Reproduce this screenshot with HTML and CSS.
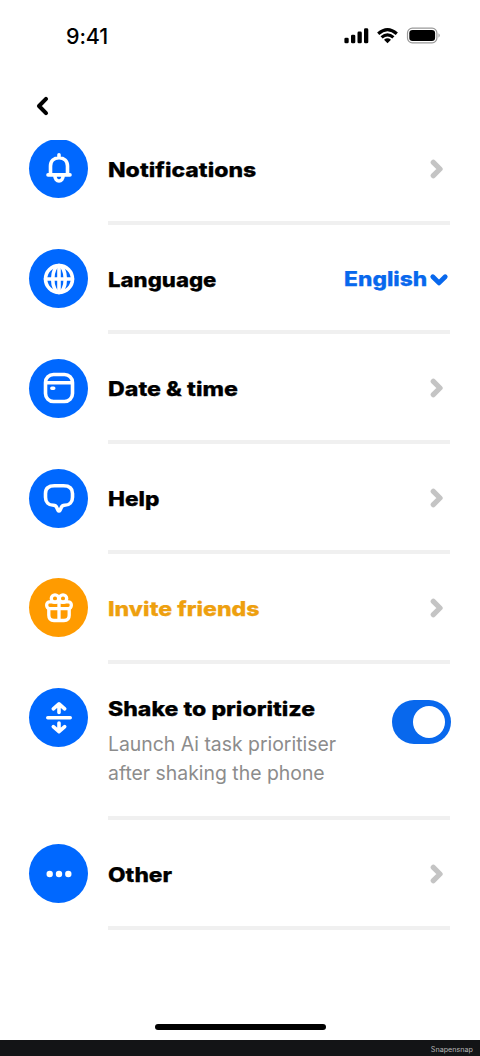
FILE: index.html
```html
<!DOCTYPE html>
<html lang="en">
<head>
<meta charset="utf-8">
<title>Settings</title>
<link rel="stylesheet" href="styles.css">
</head>
<body>
<main class="screen">
  <header class="status">
    <span class="clock">9:41</span>
    <svg class="status-icons" width="98" height="18" viewBox="0 0 98 18">
      <rect x="0.4" y="10.7" width="4.3" height="5.6" rx="1.4"/>
      <rect x="7" y="7.7" width="4.3" height="8.6" rx="1.4"/>
      <rect x="13.5" y="4.6" width="4.3" height="11.7" rx="1.4"/>
      <rect x="20" y="1.3" width="4.3" height="15" rx="1.4"/>
      <g fill="none" stroke="#000" stroke-width="3.2">
        <path d="M34.2 6.7Q43.5-1.6 52.8 6.7"/>
        <path d="M37.6 10.4Q43.5 5.2 49.4 10.4"/>
      </g>
      <path d="M40 12.7Q43.5 9.9 47 12.7L43.5 16.3Z"/>
      <rect x="63.5" y="1.2" width="29.4" height="14.6" rx="4.8" fill="none" stroke="#999" stroke-width="1.2"/>
      <rect x="65.3" y="3" width="25.8" height="11" rx="3.3"/>
      <path d="M94.5 6.3Q97 8.5 94.5 10.8Z" fill="#999"/>
    </svg>
  </header>
  <nav class="nav">
    <svg width="14" height="20" viewBox="0 0 14 20"><path class="back" d="M11 2.900 4 10l7 7.100"/></svg>
  </nav>
  <ul class="list">
    <li class="row">
      <span class="badge"><svg class="icon" viewBox="0 0 32 32"><path d="M7.500 21.800V13.100C7.500 7.900 11 4.700 16 4.700s8.500 3.200 8.500 8.400V21.800M5 21.900H27M16 4.500V1.700M11.800 22.300C12 29.800 20 29.800 20.200 22.300"/></svg></span>
      <div class="content"><span class="title t-notifications">Notifications</span><svg class="chevron" viewBox="0 0 14 20"><path d="M3.300 3.300 10 10 3.300 16.700"/></svg></div>
    </li>
    <li class="row">
      <span class="badge"><svg class="icon" viewBox="0 0 32 32"><circle cx="16" cy="16" r="13.500"/><ellipse cx="16" cy="16" rx="6.300" ry="13.500"/><path d="M16 2.500V29.500M2.500 16H29.500"/></svg></span>
      <div class="content"><span class="title t-language">Language</span><span class="value"><span class="value-text">English</span><svg class="down" viewBox="0 0 18 14"><path d="M2.800 3.700 9 9.900 15.200 3.700"/></svg></span></div>
    </li>
    <li class="row">
      <span class="badge"><svg class="icon" viewBox="0 0 32 32"><rect x="2.500" y="2.500" width="27" height="27" rx="8"/><path d="M3 10.700H29M8.900 16.200H10.700"/></svg></span>
      <div class="content"><span class="title t-date">Date &amp; time</span><svg class="chevron" viewBox="0 0 14 20"><path d="M3.300 3.300 10 10 3.300 16.700"/></svg></div>
    </li>
    <li class="row">
      <span class="badge"><svg class="icon" viewBox="0 0 32 32"><path d="M11.500 3.800H20.500Q29.500 3.800 29.500 11.500V15.200C29.500 20 26.500 23.300 21.500 23.300 19.500 23.300 19 24 18.300 25.500L17 28.200Q16 29.800 15 28.200L13.700 25.500C13 24 12.500 23.300 10.500 23.300 5.500 23.300 2.500 20 2.500 15.200V11.500Q2.500 3.800 11.500 3.800Z"/></svg></span>
      <div class="content"><span class="title t-help">Help</span><svg class="chevron" viewBox="0 0 14 20"><path d="M3.300 3.300 10 10 3.300 16.700"/></svg></div>
    </li>
    <li class="row invite">
      <span class="badge"><svg class="icon" viewBox="0 0 32 32"><rect x="3.700" y="9.800" width="24.600" height="6.800" rx="3"/><path d="M5.800 17V23.300Q5.800 28.500 11 28.500H21Q26.200 28.500 26.200 23.300V17M16 9.500V28"/><circle cx="12" cy="6.600" r="3.700"/><circle cx="20" cy="6.600" r="3.700"/></svg></span>
      <div class="content"><span class="title t-invite">Invite friends</span><svg class="chevron" viewBox="0 0 14 20"><path d="M3.300 3.300 10 10 3.300 16.700"/></svg></div>
    </li>
    <li class="row shake">
      <span class="badge"><svg class="icon" viewBox="0 0 32 32"><path d="M4.800 15.800H27.200M16 10.500V2.300M10.300 6.900 16 1.800 21.700 6.900M16 21V29.200M10.300 24.600 16 29.700 21.700 24.600"/></svg></span>
      <div class="content"><div class="copy"><span class="title t-shake">Shake to prioritize</span><p class="note">Launch Ai task prioritiser<br>after shaking the phone</p></div><span class="toggle"><span class="knob"></span></span></div>
    </li>
    <li class="row">
      <span class="badge"><svg class="icon dots" viewBox="0 0 32 32"><circle cx="6.700" cy="16" r="3.200"/><circle cx="16" cy="16" r="3.200"/><circle cx="25.300" cy="16" r="3.200"/></svg></span>
      <div class="content"><span class="title t-other">Other</span><svg class="chevron" viewBox="0 0 14 20"><path d="M3.300 3.300 10 10 3.300 16.700"/></svg></div>
    </li>
  </ul>
  <div class="home"></div>
</main>
<footer class="credit">Snapensnap</footer>
</body>
</html>
```
FILE: styles.css
```css
* { box-sizing: border-box; }
body { margin: 0; background: #fff; color: #000; font-family: Inter, "Liberation Sans", sans-serif; }
.screen { height: 1040px; display: flex; flex-direction: column; }
.status { height: 72px; flex: none; display: flex; justify-content: space-between; align-items: center; padding: 0 38px 0 66px; }
.clock { font-size: 21.5px; font-weight: 500; letter-spacing: -0.1px; line-height: 28px; }
.nav { height: 68px; flex: none; padding: 24px 0 0 35px; }
.nav svg { display: block; }
.back { fill: none; stroke: #000; stroke-width: 4.1; stroke-linecap: round; stroke-linejoin: round; }
.list { list-style: none; margin: 0; padding: 0; height: 870px; flex: none; overflow: hidden; }
.row { display: flex; gap: 20px; height: 109.8px; padding: 0 29.6px 0 29px; }
.row:first-child { margin-top: -25.2px; }
.badge { width: 59px; height: 59px; margin-top: 24.4px; flex: none; border-radius: 50%; background: #0068ff; display: flex; align-items: center; justify-content: center; }
.invite .badge { background: #ff9b00; }
.icon { width: 32px; height: 32px; fill: none; stroke: #fff; stroke-width: 3.6; stroke-linecap: round; stroke-linejoin: round; overflow: visible; }
.invite .icon { stroke-width: 3.3; }
.dots { fill: #fff; stroke: none; }
.content { flex: 1; display: flex; justify-content: space-between; padding-top: 39px; border-bottom: 4px solid #f0f0f0; }
.title { display: block; font-size: 20.3px; line-height: 31px; font-weight: 800; white-space: nowrap; -webkit-text-stroke: 0.25px currentColor; transform-origin: left center; }
.t-notifications { transform: scaleX(1.135); }
.t-language { transform: scaleX(1.093); }
.t-date { transform: scaleX(1.145); }
.t-help { transform: scaleX(1.115); }
.t-invite { transform: scaleX(1.14); }
.t-shake { transform: scaleX(1.137); }
.t-other { transform: scaleX(1.123); }
.invite .title { color: #eea00f; }
.chevron { width: 14px; height: 20px; margin: 5px 6px 0 0; fill: none; stroke: #c4c4c4; stroke-width: 5.3; stroke-linecap: round; stroke-linejoin: round; overflow: visible; }
.value { display: flex; gap: 3px; margin-right: 2.5px; color: #0868ed; }
.value-text { font-size: 20.3px; line-height: 29px; font-weight: 800; -webkit-text-stroke: 0.25px currentColor; transform: scaleX(1.12); transform-origin: right center; }
.down { width: 18px; height: 14px; margin-top: 9.5px; fill: none; stroke: currentColor; stroke-width: 4.8; stroke-linecap: round; stroke-linejoin: round; overflow: visible; }
.shake { height: 156.2px; }
.shake .content { padding-top: 29.5px; }
.note { margin: 5.5px 0 0; font-size: 19.4px; line-height: 29.3px; color: #8c8c8c; white-space: nowrap; }
.toggle { width: 59px; height: 44px; margin: 7px -0.6px 0 0; padding: 6px; border-radius: 22px; background: #0868ed; display: flex; justify-content: flex-end; flex: none; }
.knob { width: 32px; height: 32px; border-radius: 50%; background: #fff; }
.home { width: 171px; height: 6px; border-radius: 3px; background: #000; margin: 14px auto 0; }
.credit { height: 16px; background: #131416; color: #b8b8b8; font: 7.2px/19px Inter, sans-serif; text-align: right; padding-right: 7px; }
```
